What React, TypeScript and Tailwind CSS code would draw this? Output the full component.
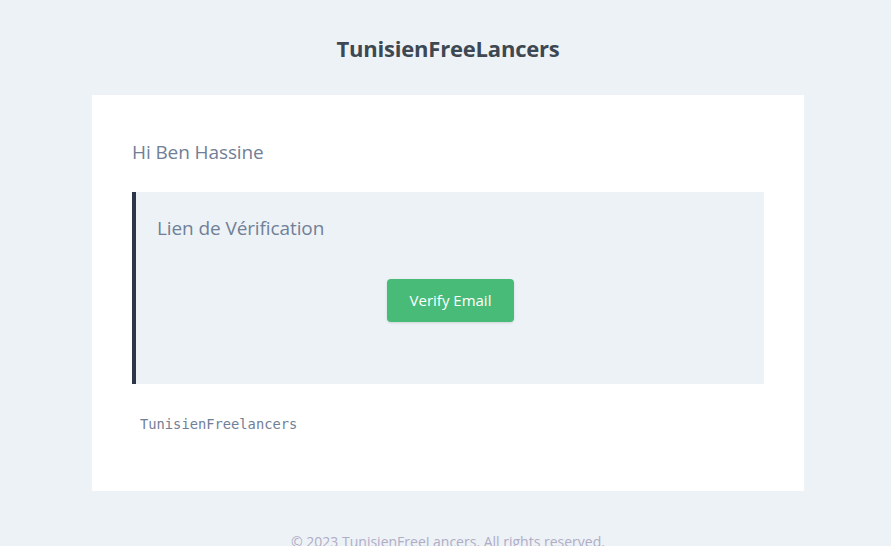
import React from 'react';

export default function App() {
  return (
    <div
      className="min-h-screen w-full bg-[#edf2f7] overflow-hidden"
      style={{ fontFamily: '"Open Sans", "Noto Sans", sans-serif' }}
    >
      <div className="w-[712px] ml-[92px]">
        <div className="h-[95px] flex items-center justify-center">
          <h1 className="text-[22px] font-bold text-[#3d4852] tracking-[-0.2px] mt-[2px]">TunisienFreeLancers</h1>
        </div>

        <div className="bg-white h-[396px] px-[40px] pt-[42px]">
          <p className="text-[19px] text-[#718096] leading-[30px] tracking-[-0.1px]">Hi Ben Hassine</p>

          <div className="mt-[25px] h-[192px] bg-[#edf2f7] border-l-4 border-[#2d3748] pl-[21px] pr-[20px] pt-[21px]">
            <p className="text-[19px] text-[#718096] leading-[30px] tracking-[-0.1px]">Lien de Vérification</p>
            <div className="flex justify-center mt-[36px]">
              <button className="w-[127px] h-[43px] rounded bg-[#48bb78] text-white text-[15px] shadow-sm">
                Verify Email
              </button>
            </div>
          </div>

          <p
            className="mt-[30px] ml-[8px] text-[13.75px] text-[#718096]"
            style={{ fontFamily: '"DejaVu Sans Mono", monospace' }}
          >
            TunisienFreelancers
          </p>
        </div>

        <p className="mt-[40px] text-center text-[14px] text-[#b0adc5]">
          © 2023 TunisienFreeLancers. All rights reserved.
        </p>
      </div>
    </div>
  );
}
